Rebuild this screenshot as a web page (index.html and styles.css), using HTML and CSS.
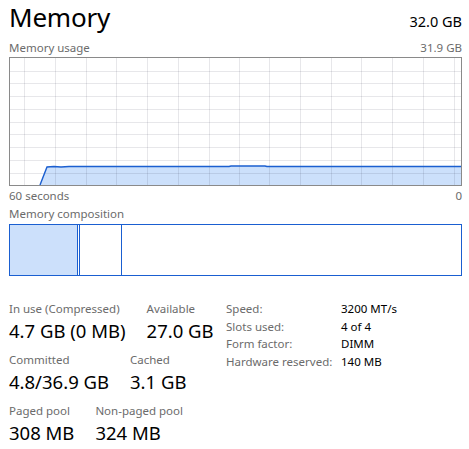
FILE: index.html
```html
<!DOCTYPE html>
<html>
<head>
<meta charset="utf-8">
<link rel="stylesheet" href="styles.css">
</head>
<body>
<div class="page">
  <div class="header">
    <div class="title">Memory</div>
    <div class="total">32.0 GB</div>
  </div>
  <div class="caption">
    <span>Memory usage</span>
    <span>31.9 GB</span>
  </div>
  <svg class="graph" width="453" height="129" viewBox="0 0 453 129">
    <polygon class="area" points="31,128 38,110 45,109.5 52,110 60,109.5 220,109.5 222,109 256,109 258,109.5 452,109.5 452,128"/>
    <g class="grid">
      <line x1="15.5" y1="0" x2="15.5" y2="129"/>
      <line x1="46.5" y1="0" x2="46.5" y2="129"/>
      <line x1="77.5" y1="0" x2="77.5" y2="129"/>
      <line x1="107.5" y1="0" x2="107.5" y2="129"/>
      <line x1="138.5" y1="0" x2="138.5" y2="129"/>
      <line x1="169.5" y1="0" x2="169.5" y2="129"/>
      <line x1="200.5" y1="0" x2="200.5" y2="129"/>
      <line x1="230.5" y1="0" x2="230.5" y2="129"/>
      <line x1="260.5" y1="0" x2="260.5" y2="129"/>
      <line x1="291.5" y1="0" x2="291.5" y2="129"/>
      <line x1="322.5" y1="0" x2="322.5" y2="129"/>
      <line x1="352.5" y1="0" x2="352.5" y2="129"/>
      <line x1="383.5" y1="0" x2="383.5" y2="129"/>
      <line x1="414.5" y1="0" x2="414.5" y2="129"/>
      <line x1="445.5" y1="0" x2="445.5" y2="129"/>
      <line x1="0" y1="14.5" x2="453" y2="14.5"/>
      <line x1="0" y1="26.5" x2="453" y2="26.5"/>
      <line x1="0" y1="39.5" x2="453" y2="39.5"/>
      <line x1="0" y1="52.5" x2="453" y2="52.5"/>
      <line x1="0" y1="65.5" x2="453" y2="65.5"/>
      <line x1="0" y1="77.5" x2="453" y2="77.5"/>
      <line x1="0" y1="90.5" x2="453" y2="90.5"/>
      <line x1="0" y1="103.5" x2="453" y2="103.5"/>
      <line x1="0" y1="116.5" x2="453" y2="116.5"/>
    </g>
    <polyline class="line" points="31,128 38,110 45,109.5 52,110 60,109.5 220,109.5 222,109 256,109 258,109.5 452,109.5"/>
    <rect class="frame" x="0.5" y="0.5" width="452" height="128"/>
  </svg>
  <div class="axis">
    <span>60 seconds</span>
    <span>0</span>
  </div>
  <div class="caption comp-caption">
    <span>Memory composition</span>
  </div>
  <div class="comp">
    <div class="seg inuse"></div>
    <div class="seg modified"></div>
    <div class="seg rest"></div>
  </div>
  <div class="stats">
    <div class="left">
      <div class="row">
        <div class="stat"><div class="label">In use (Compressed)</div><div class="value">4.7 GB (0 MB)</div></div>
        <div class="stat"><div class="label">Available</div><div class="value">27.0 GB</div></div>
      </div>
      <div class="row">
        <div class="stat"><div class="label">Committed</div><div class="value">4.8/36.9 GB</div></div>
        <div class="stat"><div class="label">Cached</div><div class="value">3.1 GB</div></div>
      </div>
      <div class="row">
        <div class="stat"><div class="label">Paged pool</div><div class="value">308 MB</div></div>
        <div class="stat"><div class="label">Non-paged pool</div><div class="value">324 MB</div></div>
      </div>
    </div>
    <div class="props">
      <span class="k">Speed:</span><span class="v">3200 MT/s</span>
      <span class="k">Slots used:</span><span class="v">4 of 4</span>
      <span class="k">Form factor:</span><span class="v">DIMM</span>
      <span class="k">Hardware reserved:</span><span class="v">140 MB</span>
    </div>
  </div>
</div>
</body>
</html>
```
FILE: styles.css
```css
html, body {
  margin: 0;
  padding: 0;
  background: #ffffff;
}
body {
  font-family: "Noto Sans", "Open Sans", sans-serif;
  color: #000;
  width: 469px;
  height: 449px;
  overflow: hidden;
}
.page {
  padding: 0 7px 0 9px;
}
.header {
  display: flex;
  justify-content: space-between;
  align-items: baseline;
  height: 35px;
}
.title {
  font-size: 26px;
  line-height: 35px;
  letter-spacing: -0.2px;
}
.total {
  font-size: 14.5px;
  line-height: 22px;
}
.caption, .axis {
  display: flex;
  justify-content: space-between;
  font-size: 11.5px;
  line-height: 16px;
  color: #6b6b6b;
}
.caption {
  margin-top: 4px;
  padding-top: 1px;
  height: 16px;
  margin-bottom: 1px;
}
.axis {
  padding-top: 2px;
}
.graph {
  display: block;
}
.area {
  fill: #cce0fb;
}
.grid line {
  stroke: rgba(40, 40, 60, 0.11);
  stroke-width: 1;
}
.line {
  fill: none;
  stroke: #1b5fd0;
  stroke-width: 1.4;
}
.frame {
  fill: none;
  stroke: #8a8a8a;
  stroke-width: 1;
}
.comp-caption {
  margin-top: 1px;
  padding-top: 1px;
  height: 16px;
  margin-bottom: 2px;
}
.comp {
  display: flex;
  height: 50px;
  border: 1px solid #1a5fd1;
}
.seg.inuse {
  width: 67px;
  background: #cce0fb;
  border-right: 1px solid #1a5fd1;
}
.seg.modified {
  width: 41px;
  margin-left: 1px;
  border-left: 1px solid #1a5fd1;
  border-right: 1px solid #1a5fd1;
}
.seg.rest {
  flex: 1;
}
.stats {
  display: flex;
  margin-top: 25px;
}
.left {
  display: flex;
  flex-direction: column;
  gap: 8px;
  width: 217px;
}
.row {
  display: flex;
  gap: 21px;
}
.label {
  font-size: 11.5px;
  line-height: 16px;
  color: #6b6b6b;
  white-space: nowrap;
}
.value {
  font-size: 18.5px;
  line-height: 26px;
  margin-top: 1px;
  white-space: nowrap;
}
.props {
  display: grid;
  grid-template-columns: 115px auto;
  font-size: 11.5px;
  line-height: 17.5px;
  align-content: start;
  margin-top: -1px;
}
.props .k {
  color: #6b6b6b;
}
.props .v {
  color: #000;
}
```
